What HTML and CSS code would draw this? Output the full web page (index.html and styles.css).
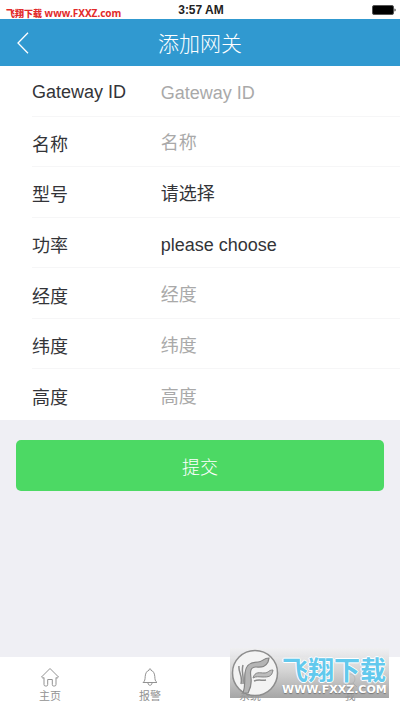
FILE: index.html
```html
<!DOCTYPE html>
<html lang="zh-CN">
<head>
<meta charset="utf-8">
<meta name="viewport" content="width=device-width, initial-scale=1">
<title>添加网关</title>
<link rel="stylesheet" href="styles.css">
</head>
<body>
<div class="status">
  <span class="site"><b>飞翔下载</b> www.FXXZ.com</span>
  <span class="time">3:57 AM</span>
  <svg class="battery" width="24" height="10" viewBox="0 0 24 10" aria-hidden="true"><rect x=".5" y=".5" width="21" height="9" rx="1.5" fill="#000" stroke="#555"/><path d="M22.500 3.500v3l1-.5v-2z" fill="#222"/></svg>
</div>
<header class="bar">
  <button class="back" type="button" aria-label="返回"><svg width="12" height="22" viewBox="0 0 12 22"><path d="M11 .8 1 11l10 10.200" fill="none" stroke="currentColor" stroke-width="1.300"/></svg></button>
  <h1>添加网关</h1>
</header>
<main>
  <form>
    <div class="fields">
      <div class="row"><label for="gid">Gateway ID</label><input id="gid" type="text" placeholder="Gateway ID"></div>
      <div class="row"><label for="name">名称</label><input id="name" type="text" placeholder="名称"></div>
      <div class="row"><label for="model">型号</label><select id="model"><option>请选择</option></select></div>
      <div class="row"><label for="power">功率</label><select id="power"><option>please choose</option></select></div>
      <div class="row"><label for="lng">经度</label><input id="lng" type="text" placeholder="经度"></div>
      <div class="row"><label for="lat">纬度</label><input id="lat" type="text" placeholder="纬度"></div>
      <div class="row"><label for="alt">高度</label><input id="alt" type="text" placeholder="高度"></div>
    </div>
    <button class="submit" type="button">提交</button>
  </form>
</main>
<nav class="tabs">
  <a href="#home"><svg width="20" height="20" viewBox="0 0 20 20"><path d="M1.500 10 10 1.500l8.500 8.500-1.500 1.300-1-.8v7q0 1.500-1.500 1.500h-1q-1.200 0-1.200-1.500v-5H7.700v5q0 1.500-1.200 1.500h-1Q4 19 4 17.500v-7l-1 .8z"/></svg>主页</a>
  <a href="#alarm"><svg width="20" height="20" viewBox="0 0 20 20"><path d="M3 15.500c2-1.500 2-3 2.200-6C5.400 6 7 3.800 9 3.300V2.500q1-1.500 2 0v.8c2 .5 3.600 2.700 3.800 6.200.2 3 .2 4.500 2.200 6zM8 16c0 3 4 3 4 0"/></svg>报警</a>
  <a href="#system"><svg width="20" height="20" viewBox="0 0 20 20"><circle cx="10" cy="10" r="7"/></svg>系统</a>
  <a href="#me"><svg width="20" height="20" viewBox="0 0 20 20"><circle cx="10" cy="12" r="5"/><path d="M3 20l4-4M17 20l-4-4"/></svg>我</a>
</nav>
<div class="mark">
  <svg width="48" height="48" viewBox="0 0 48 48" aria-hidden="true">
    <circle cx="24" cy="24" r="22.500" fill="#f3f3f3" stroke="#8d8d8d" stroke-width="1.500"/>
    <path d="M12 44c3-8 1-13 2-20 1-9 6-11 13-11 5 0 5-4 11-4l-1 4c-3 6-7 5-12 5-6 0-6 5-5 11 1 8-1 11-3 15z" fill="#b5b5b5" stroke="#858585" stroke-width="1.200"/>
    <path d="M22 29c2-7 7-5 11-5 5 0 4-3 9-3-1 7-5 7-10 7-4 0-7-1-10 1z" fill="#bdbdbd" stroke="#858585"/>
    <path d="M23 32c5-2 8 0 12-1M8 17c-1 6 4 9 2 18M12 16c-2 7 1 9 0 19" fill="none" stroke="#8b8b8b" stroke-width="1.500"/>
  </svg>
  <div class="words"><strong>飞翔下载</strong><span>WWW.FXXZ.COM</span></div>
</div>
</body>
</html>
```
FILE: styles.css
```css
* { box-sizing: border-box; }
body {
  margin: 0;
  min-height: 100vh;
  display: flex;
  flex-direction: column;
  position: relative;
  background: #efeff4;
  color: #333438;
  font-family: "Liberation Sans", "Noto Sans CJK SC", sans-serif;
  font-size: 18px;
}
button, input, select { font: inherit; color: inherit; border: 0; margin: 0; padding: 0; background: none; }
.status {
  display: grid;
  grid-template-columns: 1fr auto 1fr;
  align-items: center;
  height: 19px;
  padding: 0 4px 0 6px;
  background: #fff;
}
.site { font: bold 10px/12px "Noto Sans", "Noto Sans CJK SC", sans-serif; color: #e22b2b; padding-top: 7px; white-space: nowrap; }
.site b { font-size: 9px; }
.time { font: bold 12px/19px "Liberation Sans", sans-serif; color: #222; }
.battery { justify-self: end; }
.bar {
  display: grid;
  grid-template-columns: 48px 1fr 48px;
  align-items: center;
  height: 47px;
  background: #3099d0;
  color: #fff;
}
.back { display: flex; align-items: center; height: 47px; padding-left: 17px; }
.bar h1 { margin: 0; font-size: 21px; line-height: 45px; font-weight: 300; text-align: center; font-family: "Noto Sans CJK SC", sans-serif; }
main { flex: 1; }
.fields {
  display: grid;
  grid-auto-rows: 1fr;
  min-height: 354px;
  padding-left: 32px;
  background: #fff;
}
.row { display: grid; grid-template-columns: 35% 1fr; align-items: center; border-bottom: 1px solid #f6f6f7; }
.row:last-child { border-bottom: 0; }
.row label { padding-top: 3px; }
.row input, .row select { width: 100%; height: 48px; outline: 0; appearance: none; padding-top: 5px; }
.row input::placeholder { color: #a9a9a9; opacity: 1; }
.submit {
  display: block;
  width: calc(100% - 32px);
  height: 51px;
  margin: 20px 16px;
  border-radius: 5px;
  background: #4cd964;
  color: #fff;
  font-weight: 300;
}
.tabs {
  display: grid;
  grid-template-columns: repeat(4, 1fr);
  height: 53px;
  background: #fff;
}
.tabs a {
  display: flex;
  flex-direction: column;
  align-items: center;
  padding-top: 10px;
  color: #929292;
  font-size: 11px;
  line-height: 19px;
  text-decoration: none;
}
.tabs svg { fill: none; stroke: #929292; stroke-width: 1; }
.mark {
  position: absolute;
  right: 11px;
  bottom: 12px;
  display: flex;
  align-items: center;
  width: 159px;
  height: 50px;
  padding-left: 1px;
  background: linear-gradient(rgba(240, 240, 242, .85), rgba(205, 205, 205, .85) 45%, rgba(150, 150, 150, .85));
}
.words { display: flex; flex-direction: column; padding: 5px 0 0 3px; white-space: nowrap; }
.words strong {
  font: bold 26px/27px "Noto Sans CJK SC", sans-serif;
  color: #62c9ed;
  text-shadow: 1px 0 #fff, -1px 0 #fff, 0 1px #fff, 0 -1px #fff;
}
.words span {
  font: bold 11px/15px "DejaVu Sans", sans-serif;
  color: #fff;
  text-shadow: 0 1px 1px #777;
}
```
